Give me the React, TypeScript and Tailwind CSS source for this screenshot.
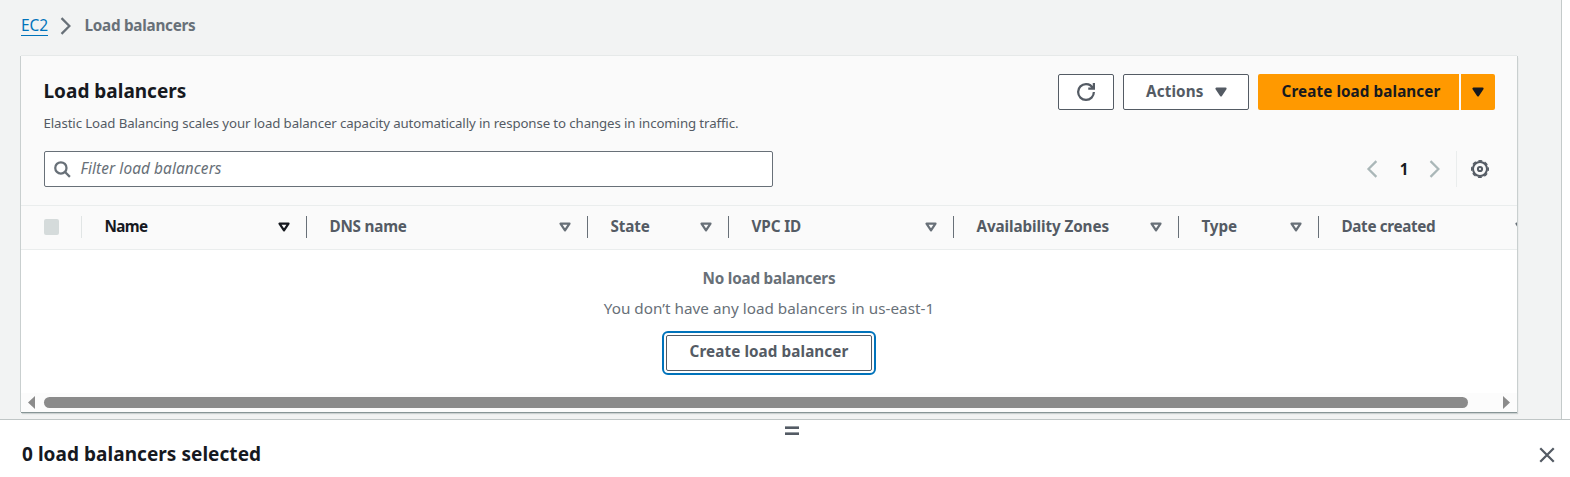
import type { ReactNode } from "react";

function Icon({ children, className = "" }: { children: ReactNode; className?: string }) {
  return (
    <svg
      viewBox="0 0 16 16"
      className={`block size-[18px] shrink-0 ${className}`}
      fill="none"
      stroke="currentColor"
      strokeWidth="2"
    >
      {children}
    </svg>
  );
}

function Caret({ filled = false, className = "" }: { filled?: boolean; className?: string }) {
  return (
    <Icon className={className}>
      <path d="M4 5h8l-4 6-4-6z" fill={filled ? "currentColor" : "none"} strokeLinejoin="round" />
    </Icon>
  );
}

const columns = [
  { label: "Name", width: "w-[225px]", tracking: "tracking-[-0.6px]", active: true },
  { label: "DNS name", width: "w-[281px]", tracking: "tracking-[-0.22px]" },
  { label: "State", width: "w-[141px]", tracking: "tracking-[-0.13px]" },
  { label: "VPC ID", width: "w-[225px]", tracking: "tracking-[-0.1px]" },
  { label: "Availability Zones", width: "w-[225px]", tracking: "tracking-[-0.1px]" },
  { label: "Type", width: "w-[140px]", tracking: "tracking-[-0.13px]" },
  { label: "Date created", width: "w-[225px]", tracking: "tracking-[-0.34px]" },
];

export default function App() {
  return (
    <div className="flex h-[477px] w-[1570px] flex-col overflow-hidden bg-white font-['Noto_Sans','Open_Sans',sans-serif] text-[15.25px] leading-6 text-[#545b64]">
      <div className="flex h-[419px] shrink-0">
        <main className="w-[1562px] shrink-0 border-r border-[#c4caca] bg-[#f2f3f3] pl-[21px]">
          <nav className="flex h-14 items-start pt-[13px] text-[#687078]">
            <a className="h-[23px] border-b border-[#0073bb] leading-6 text-[15.5px] tracking-[-0.1px] text-[#0073bb]">EC2</a>
            <Icon className="ml-[9px] mt-1">
              <path d="m4 1 7 7-7 7" />
            </Icon>
            <span className="ml-[9.5px] font-bold tracking-[-0.26px]">Load balancers</span>
          </nav>

          <section className="flex h-[356px] w-[1496px] flex-col overflow-hidden bg-white shadow-[0_1px_0_#879596,0_-1px_0_#e6e9e9,-1px_0_0_#c9cfcf,1px_0_0_#c9cfcf,1px_2px_1px_#cbd0d0]">
            <header className="h-[150px] shrink-0 border-b border-[#eaeded] bg-[#fafafa] pl-[23px] pr-[22px] pt-[18px]">
              <div className="flex h-[77px] justify-between">
                <div>
                  <h1 className="-ml-[0.5px] pt-[5px] text-[19px] font-bold leading-6 text-[#16191f]">Load balancers</h1>
                  <p className="-ml-[0.5px] mt-[10px] text-[13.25px] leading-5 tracking-[-0.107px]">
                    Elastic Load Balancing scales your load balancer capacity automatically in response to changes in incoming traffic.
                  </p>
                </div>
                <div className="flex h-9 font-bold">
                  <button className="mr-[9px] flex w-14 items-center justify-center rounded-[2px] border border-[#545b64] bg-white">
                    <Icon>
                      <path d="M10 5h5V0M15 8a6.957 6.957 0 0 1-7 7 6.957 6.957 0 0 1-7-7 6.957 6.957 0 0 1 7-7 6.87 6.87 0 0 1 6.3 4" />
                    </Icon>
                  </button>
                  <button className="mr-[9px] flex w-[126px] items-center rounded-[2px] border border-[#545b64] bg-white pl-[22px] tracking-[0.12px]">
                    <span className="w-[66px] pb-0.5 text-left">Actions</span>
                    <Caret filled />
                  </button>
                  <button className="mr-0.5 w-[201px] rounded-l-[2px] bg-[#ff9900] pb-[3px] pl-[5px] tracking-[0.08px] text-[#16191f]">Create load balancer</button>
                  <button className="flex w-[34px] items-center rounded-r-[2px] bg-[#ff9900] pl-2 text-[#16191f]">
                    <Caret filled />
                  </button>
                </div>
              </div>

              <div className="flex h-9 justify-between">
                <label className="flex w-[729px] items-center rounded-[2px] border border-[#687078] bg-white pl-2 text-[#687078]">
                  <Icon>
                    <circle cx="7" cy="7" r="5" />
                    <path d="m15 15-4.5-4.5" />
                  </Icon>
                  <span className="ml-[9.5px] text-[15.4px] italic tracking-[0.09px]">Filter load balancers</span>
                </label>
                <div className="flex items-center">
                  <Icon className="text-[#aab7b8]">
                    <path d="m11 1-7 7 7 7" />
                  </Icon>
                  <span className="w-[44px] text-center font-bold text-[#16191f]">1</span>
                  <Icon className="text-[#aab7b8]">
                    <path d="m4 1 7 7-7 7" />
                  </Icon>
                  <span className="ml-3 mr-[14px] h-9 w-px bg-[#eaeded]" />
                  <svg viewBox="0 0 18 18" className="mr-1.5 size-[18px]" fill="none" stroke="currentColor">
                    <circle cx="9" cy="9" r="7" strokeWidth="2" />
                    <circle cx="9" cy="9" r="8.3" strokeWidth="1.4" strokeDasharray="3.9 2.62" strokeDashoffset="1.95" />
                    <circle cx="9" cy="9" r="2.1" strokeWidth="2" />
                  </svg>
                </div>
              </div>
            </header>

            <div className="flex h-11 shrink-0 border-b border-[#eaeded] bg-[#fafafa] pb-px font-bold">
              <div className="flex w-[61px] shrink-0 items-center pl-[23px]">
                <span className="h-4 w-[15px] rounded-[2px] bg-[#d5dbdb]" />
                <span className="ml-[22px] h-[22px] w-px bg-[#e1e5e5]" />
              </div>
              {columns.map((c) => (
                <div
                  key={c.label}
                  className={`flex shrink-0 items-center pl-[22.5px] ${c.width} ${c.active ? "text-[#16191f]" : ""}`}
                >
                  <span className={`pb-0.5 ${c.tracking}`}>{c.label}</span>
                  <Caret className={`ml-auto mr-[12.7px] ${c.active ? "" : "text-[#687078]"}`} />
                  <span className="h-[22px] w-px bg-[#687078]" />
                </div>
              ))}
            </div>

            <div className="flex h-[143px] shrink-0 flex-col items-center pt-4 text-[#687078]">
              <b className="font-bold leading-6 tracking-[-0.22px]">No load balancers</b>
              <p className="mt-1.5 leading-6 tracking-[0.02px]">You don’t have any load balancers in us-east-1</p>
              <button className="mt-[15px] h-9 w-[206px] shrink-0 rounded-[2px] border border-[#545b64] bg-white pb-[5px] font-bold tracking-[0.08px] text-[#545b64] outline-2 outline-offset-2 outline-[#0073bb]">
                Create load balancer
              </button>
            </div>

            <div className="flex h-[19px] shrink-0 items-center bg-[#fcfcfc] px-[7px]">
              <svg viewBox="0 0 7 13" className="h-[13px] w-[7px]" fill="#8b8b8b"><path d="M7 0v13L0 6.5z" /></svg>
              <span className="ml-[9px] h-[11px] w-[1424px] rounded-full bg-[#8b8b8b]" />
              <svg viewBox="0 0 7 13" className="ml-auto h-[13px] w-[7px]" fill="#8b8b8b"><path d="M0 0v13l7-6.5z" /></svg>
            </div>
          </section>
        </main>
      </div>

      <aside className="h-[58px] shrink-0 border-t border-[#c0c6c6] bg-white">
        <div className="ml-[785px] flex w-[14px] flex-col gap-[3px] pt-1.5">
          <span className="h-[3px] border-t border-[#949aa0] bg-[#545b64]" />
          <span className="h-[3px] border-t border-[#949aa0] bg-[#545b64]" />
        </div>
        <div className="flex items-center justify-between pl-[22px] pr-[14px] pt-[7px]">
          <h2 className="text-[19px] font-bold leading-6 tracking-[0.05px] text-[#16191f]">0 load balancers selected</h2>
          <Icon className="translate-y-px">
            <path d="m2 2 12 12M14 2 2 14" />
          </Icon>
        </div>
      </aside>
    </div>
  );
}
